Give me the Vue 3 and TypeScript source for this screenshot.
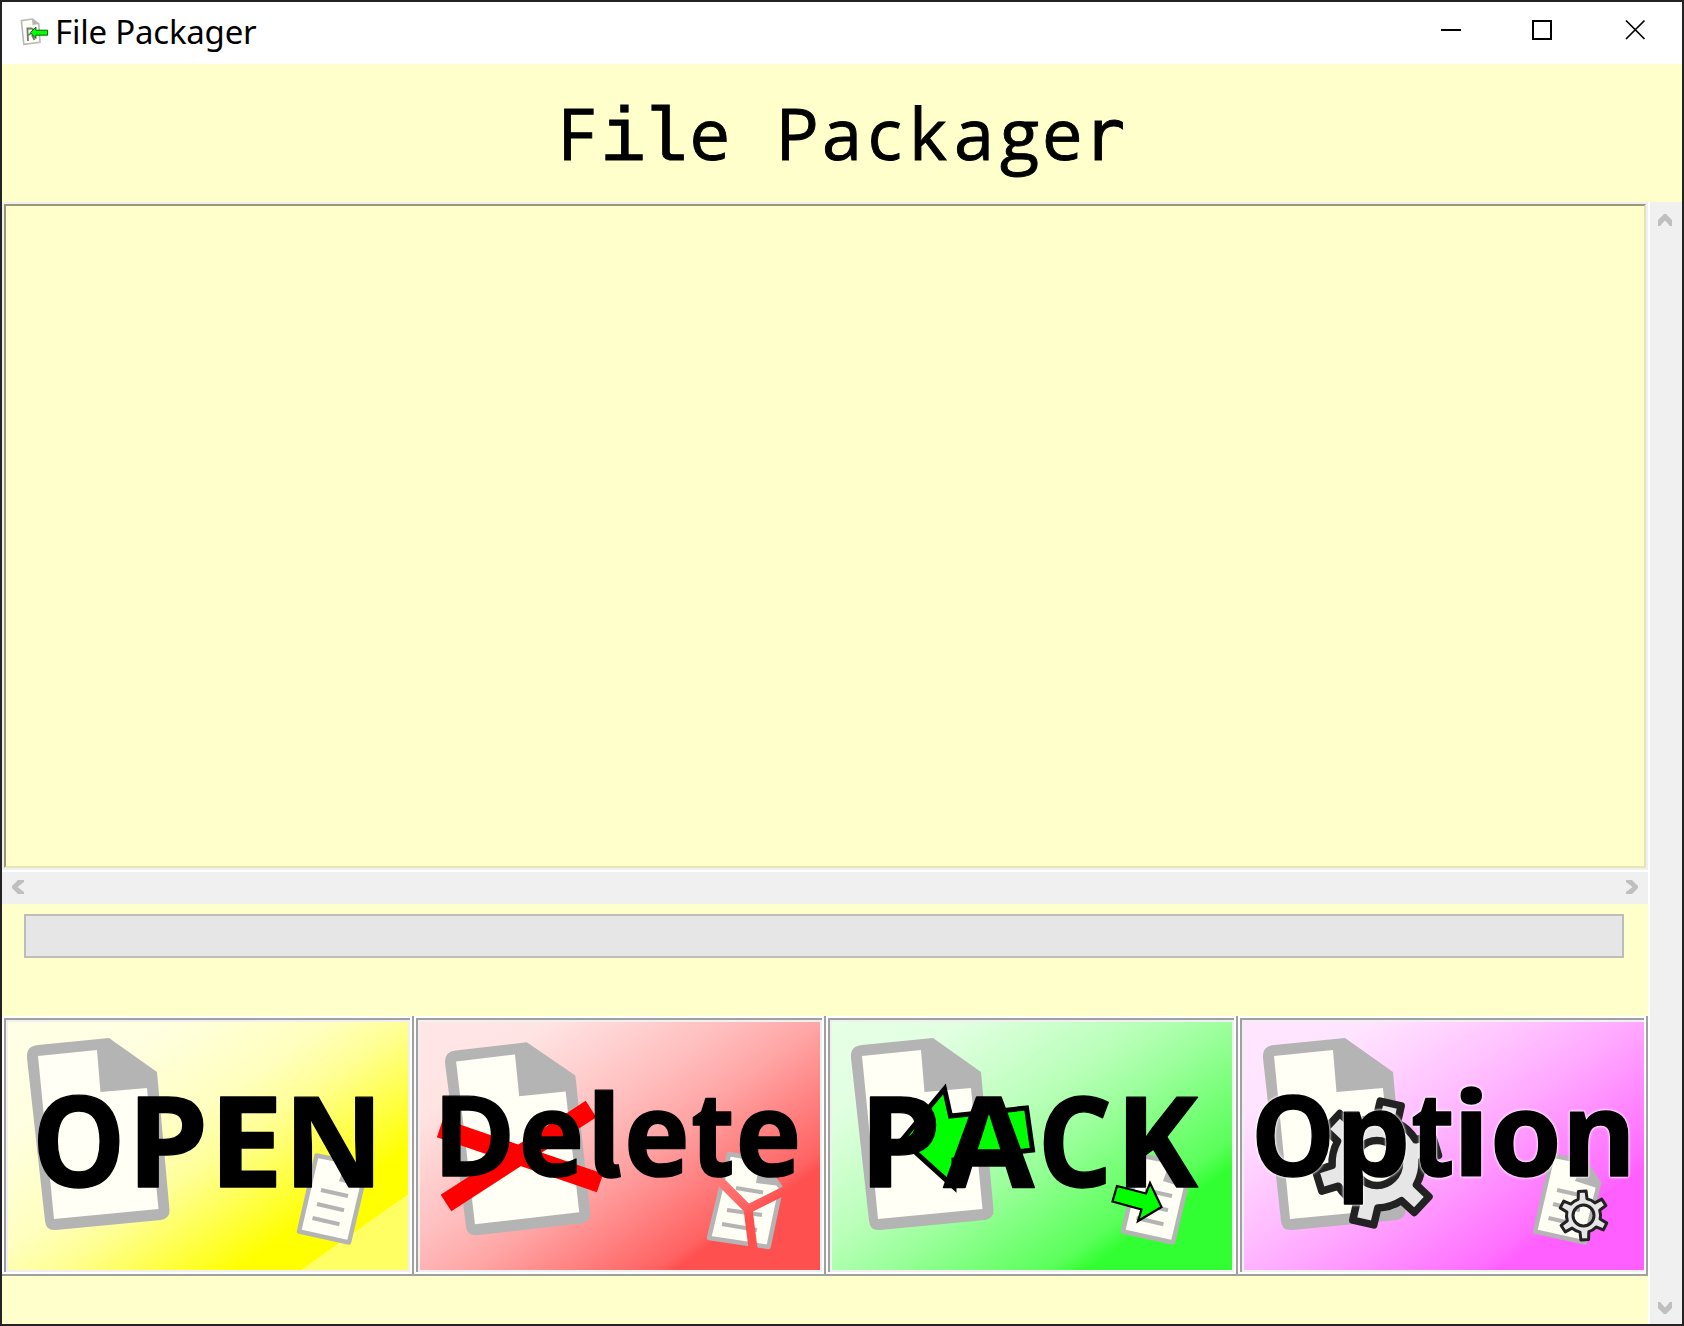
<script setup lang="ts">
type Box = [char: string, left: number, right: number]

interface ActionButton {
  id: 'open' | 'delete' | 'pack' | 'option'
  size: number
  baseline: number
  letters: Box[]
  stops: [offset: number, color: string][]
}

const buttons: ActionButton[] = [
  {
    id: 'open',
    size: 126.5,
    baseline: 165,
    letters: [['O', 29.5, 112], ['P', 129.7, 195.7], ['E', 212, 270], ['N', 286, 365.3]],
    stops: [[0, '#ffffe6'], [0.25, '#ffffe1'], [0.5, '#ffffbe'], [0.62, '#ffff96'], [0.8, '#ffff37'], [0.9, '#ffff00'], [0.999, '#ffff00'], [1, '#ffff64']],
  },
  {
    id: 'delete',
    size: 111,
    baseline: 154.2,
    letters: [['D', 22.3, 90], ['e', 102.3, 161], ['l', 174.3, 201.3], ['e', 207.7, 266.3], ['t', 272.3, 312.3], ['e', 319.3, 378]],
    stops: [[0, '#ffe6e6'], [0.2, '#ffe4e4'], [0.48, '#ffbebe'], [0.62, '#ffa6a6'], [0.91, '#ff6262'], [0.94, '#ff5050'], [1, '#ff5050']],
  },
  {
    id: 'pack',
    size: 126.5,
    baseline: 165,
    letters: [['P', 38, 104.7], ['A', 110.7, 203], ['C', 211.3, 278], ['K', 294, 367]],
    stops: [[0, '#e6ffe6'], [0.2, '#e2ffe2'], [0.48, '#baffba'], [0.62, '#9cff9c'], [0.88, '#5aff5a'], [0.94, '#32ff32'], [1, '#32ff32']],
  },
  {
    id: 'option',
    size: 111,
    baseline: 154.2,
    letters: [['O', 12, 86], ['p', 100, 162], ['t', 168.3, 208.3], ['i', 217, 237.7], ['o', 250, 313.3], ['n', 326, 384.3]],
    stops: [[0, '#ffe6ff'], [0.2, '#ffe4ff'], [0.48, '#ffbeff'], [0.62, '#ffa6ff'], [0.9, '#ff6eff'], [0.94, '#ff5fff'], [1, '#ff5fff']],
  },
]

// Left and right ink edges of the bold glyphs, in em.
const ink: Record<string, [number, number]> = {
  O: [0.055, 0.742], P: [0.09, 0.586], E: [0.09, 0.515], N: [0.09, 0.725], D: [0.09, 0.685],
  e: [0.04, 0.555], l: [0.075, 0.295], t: [0.02, 0.405], A: [0, 0.69], C: [0.055, 0.61],
  K: [0.09, 0.667], p: [0.08, 0.59], i: [0.075, 0.232], o: [0.04, 0.575], n: [0.08, 0.583],
}

function place(b: ActionButton, [ch, left, right]: Box): string {
  const [a, z] = ink[ch]
  const sx = (right - left - 1.4) / ((z - a) * b.size)
  const sy = ch === 'l' ? 0.975 : 'eonpit'.includes(ch) ? 1.045 : 1
  return `translate(${(left + 0.7 - a * b.size * sx).toFixed(2)} ${b.baseline}) scale(${sx.toFixed(3)} ${sy})`
}

function gear(cx: number, cy: number, tip: number, body: number, hole: number, start: number, tipHalf: number, baseHalf: number): string {
  const pt = (r: number, deg: number) => {
    const a = (deg * Math.PI) / 180
    return `${(cx + r * Math.cos(a)).toFixed(1)} ${(cy + r * Math.sin(a)).toFixed(1)}`
  }
  let d = ''
  for (let i = 0; i < 6; i++) {
    const c = start + i * 60
    d += i === 0 ? `M${pt(body, c - baseHalf)}` : `A${body} ${body} 0 0 1 ${pt(body, c - baseHalf)}`
    d += `L${pt(tip, c - tipHalf)}L${pt(tip, c + tipHalf)}L${pt(body, c + baseHalf)}`
  }
  d += `A${body} ${body} 0 0 1 ${pt(body, start - baseHalf)}Z`
  d += `M${cx - hole} ${cy}a${hole} ${hole} 0 1 0 ${hole * 2} 0a${hole} ${hole} 0 1 0 ${-hole * 2} 0Z`
  return d
}

const bigGear = gear(133, 141, 62, 45, 22.5, -77, 10, 14)
const smallGear = gear(339.5, 193.5, 24.5, 17, 10.5, -93, 9, 15)

const heading: [char: string, x: number, face: string][] = [
  ['F', 1.5, ''], ['i', 44.5, 'slab'], ['l', 86, 'slab'], ['e', 133.5, ''], [' ', 176, ''],
  ['P', 219.5, ''], ['a', 266, ''], ['c', 311.5, ''], ['k', 353, ''], ['a', 398, ''],
  ['g', 444, ''], ['e', 486, ''], ['r', 526.5, 'mono'],
]
</script>

<template>
  <div class="window">
    <header class="titlebar">
      <svg class="app-icon" width="30" height="30" viewBox="19 17 30 30">
        <path d="M21.4 20.6 32.5 19l6.3 5 1.2 18.4-16.2 2z" fill="#fffff5" stroke="#b9b9b9" stroke-width="1.6" />
        <path d="M32 19l7 5-6.400 1z" fill="#b4b4b4" />
        <path d="M28 41l-.6-12.500h4.500q2 1 1 4l-4.600 2.500M32 35l2.500 5" fill="none" stroke="#777" stroke-width="1.8" />
        <path d="M30.400 32.600l5.500-5.600v3.200h11.700v5h-11.700v3.300z" fill="#0f0" stroke="#064d06" stroke-width="0.9" />
      </svg>
      <span class="caption">File Packager</span>
      <div class="controls">
        <svg width="212" height="22" viewBox="0 0 212 22" fill="none" stroke="#000">
          <path d="M1 11h20" stroke-width="2" />
          <rect x="93" y="2" width="18" height="18" stroke-width="2" />
          <path d="M186 1.500l18.500 18.500M204.500 1.500L186 20" stroke-width="1.700" />
        </svg>
      </div>
    </header>

    <div class="banner">
      <svg width="572" height="138" viewBox="0 0 572 138">
        <text y="96" class="heading"><tspan v-for="([ch, x, face], i) in heading" :key="i" :x="x" :class="face">{{ ch }}</tspan></text>
      </svg>
    </div>

    <div class="body">
      <main class="content">
        <div class="listbox"></div>
        <div class="hscroll">
          <svg width="12" height="14" viewBox="0 0 12 14"><path d="M6 0h6v2L5.500 7l6.500 5v2H6L0 8V6z" fill="#bfbfbf" /></svg>
          <svg width="12" height="14" viewBox="0 0 12 14"><path d="M6 0H0v2l6.500 5L0 12v2h6l6-6V6z" fill="#bfbfbf" /></svg>
        </div>
        <div class="progress"></div>
        <div class="actions">
          <div v-for="b in buttons" :key="b.id" class="action" :class="b.id">
            <div class="bevel">
              <svg width="400" height="248" viewBox="0 0 400 248">
                <defs>
                  <linearGradient :id="`bg-${b.id}`" gradientUnits="userSpaceOnUse" x1="0" y1="0" x2="214.6" y2="303.6">
                    <stop v-for="([o, c], i) in b.stops" :key="i" :offset="o" :stop-color="c" />
                  </linearGradient>
                </defs>
                <rect width="400" height="248" :fill="`url(#bg-${b.id})`" />

                <g :transform="b.id === 'delete' ? 'translate(5.500 6) rotate(-1)' : undefined">
                  <path d="M19 36Q18 24 30 23L101 16 149 50 161.500 188Q162 196 153 198L48 208Q38 209 37 199Z" fill="#b4b4b4" />
                  <path d="M30 34L89 28 92.500 70 139 66 150.500 187 46 197Z" fill="#fffff5" />
                </g>

                <g v-if="b.id === 'delete'" stroke="#b4b4b4" stroke-linejoin="round">
                  <path d="M309 132L341 138 361 166 348.500 225 289 216Z" fill="#fffff5" stroke-width="4.500" />
                  <path d="M340 138L360 164 336 161Z" fill="#b4b4b4" stroke="none" />
                  <path d="M316 166l27 4.500M307 188l35 5M302 202l35 6" stroke-width="4" />
                  <path d="M294 153L328 187 370 166M328 187L334 234" fill="none" :stroke="`url(#bg-${b.id})`" stroke-width="9" stroke-linejoin="miter" />
                </g>
                <g v-else stroke="#b4b4b4" stroke-linejoin="round">
                  <path d="M308.500 133.500L341 140 355 161 341 220.500 291 209.500Z" fill="#fffff5" stroke-width="4.500" />
                  <path d="M339 137L356 161 353 166 331 159Z" fill="#b4b4b4" stroke="none" />
                  <path d="M313 168l27 6M309 182l27 6.300M304.500 196l27 6.300" stroke-width="4" />
                </g>

                <path v-if="b.id === 'delete'" d="M20 106L180 161M26 181L171 87" stroke="#f00" stroke-width="19.500" />

                <g v-if="b.id === 'pack'" fill="#0f0" stroke="#000">
                  <path d="M70 118L112.500 67 118.500 94 194.500 86 200.500 128 122 138 122 165Z" stroke-width="5" />
                  <path d="M285 164L314 171.500 318 161 329.500 185 306 199 309.500 187.500 280.500 179.500Z" stroke-width="2.200" />
                </g>

                <g v-if="b.id === 'option'" fill="#e6e6e6" stroke="#222" fill-rule="evenodd" stroke-linejoin="round">
                  <path :d="bigGear" stroke-width="7.500" />
                  <path :d="smallGear" stroke-width="3" />
                </g>

                <g class="label" :font-size="b.size">
                  <text v-for="(l, i) in b.letters" :key="i" :class="{ tailed: l[0] === 'l' }" :transform="place(b, l)">{{ l[0] }}</text>
                </g>
              </svg>
            </div>
          </div>
        </div>
      </main>
      <aside class="vscroll">
        <svg width="14" height="12" viewBox="0 0 14 12"><path d="M6 0h2l6 6v6h-2L7 6.500 2 12H0V6z" fill="#bfbfbf" /></svg>
        <svg width="14" height="12" viewBox="0 0 14 12"><path d="M6 12h2l6-6V0h-2L7 5.500 2 0H0v6z" fill="#bfbfbf" /></svg>
      </aside>
    </div>
  </div>
</template>

<style>
body {
  background: #222;
}
</style>

<style scoped>
.window {
  box-sizing: border-box;
  width: 1684px;
  height: 1326px;
  border: 2px solid #242223;
  background: #ffffcb;
  display: flex;
  flex-direction: column;
  overflow: hidden;
}
.titlebar {
  height: 62px;
  background: #fff;
  display: flex;
}
.app-icon {
  margin: 15px 0 0 17px;
}
.caption {
  margin-left: 6px;
  font: 33px/60px "Noto Sans", sans-serif;
  letter-spacing: -0.22px;
  white-space: pre;
}
.controls {
  margin: 17px 30px 0 auto;
}
.controls svg {
  display: block;
}
.banner {
  height: 138px;
  display: flex;
  justify-content: center;
}
.heading {
  font: 72px "Open Sans", sans-serif;
  fill: #000;
  stroke: #000;
  stroke-width: 0.9px;
  white-space: pre;
}
.slab {
  font: 76px "Liberation Mono", monospace;
}
.mono {
  font: 71px "DejaVu Sans Mono", monospace;
}
.body {
  flex: 1;
  display: flex;
}
.content {
  width: 1646px;
  display: flex;
  flex-direction: column;
}
.listbox {
  height: 660px;
  border: 2px solid #99997a;
  border-right-color: #e5e5b7;
  border-bottom-color: #e5e5b7;
  outline: 2px solid #f0f0f0;
  margin: 2px;
}
.hscroll {
  height: 32px;
  border-top: 2px solid #fff;
  background: #f0f0f0;
  display: flex;
  justify-content: space-between;
  padding: 0 10px;
}
.hscroll svg {
  margin-top: 8px;
}
.progress {
  height: 40px;
  margin: 10px 24px 58px 22px;
  border: 2px solid #bcbcbc;
  background: #e6e6e6;
}
.actions {
  display: flex;
}
.action {
  box-sizing: border-box;
  width: 412px;
  height: 260px;
  padding: 2px;
  background: #fff;
  box-shadow: inset -2px -2px #a0a0a0;
}
.bevel {
  box-sizing: border-box;
  width: 408px;
  height: 256px;
  padding: 4px;
  background: #f0f0f0;
  box-shadow: inset -2px -2px #fff, inset 2px 2px #a0a0a0;
}
.action.option {
  width: 410px;
}
.option .bevel {
  width: 406px;
}
.bevel svg {
  display: block;
}
.label {
  font-family: "Open Sans", "Noto Sans", sans-serif;
  font-weight: 700;
  fill: #000;
  stroke: #000;
  stroke-width: 1.4px;
  stroke-linejoin: round;
}
.tailed {
  font-family: "Noto Sans CJK SC", sans-serif;
}
.option .label {
  filter: drop-shadow(0 0 1px #fff) drop-shadow(0 0 1px rgba(255, 255, 255, 0.8));
}
.vscroll {
  box-sizing: border-box;
  width: 34px;
  border-left: 2px solid #fff;
  background: #f0f0f0;
  display: flex;
  flex-direction: column;
  justify-content: space-between;
  align-items: flex-start;
  padding: 12px 0 10px;
}
.vscroll svg {
  margin-left: 8px;
}
</style>
